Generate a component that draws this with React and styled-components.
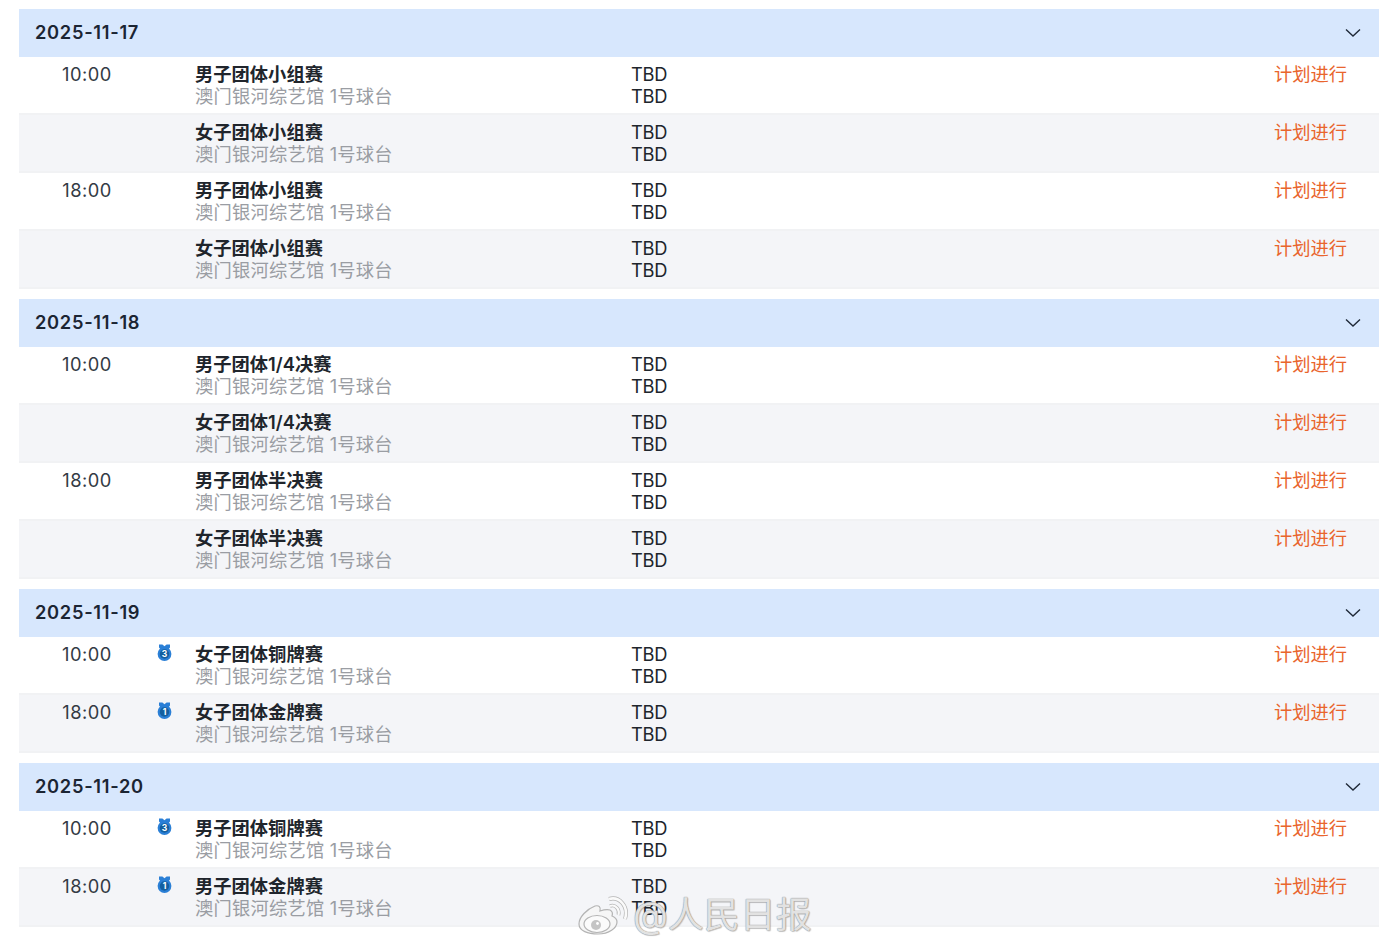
import React from 'react';
import styled, { createGlobalStyle } from 'styled-components';

const GlobalStyle = createGlobalStyle`
    html, body {
        margin: 0;
        padding: 0;
        background: #ffffff;
        font-family: Inter, "Noto Sans CJK SC", sans-serif;
    }
`;

const schedule = [
    {
        date: '2025-11-17',
        rows: [
            { time: '10:00', title: '男子团体小组赛' },
            { title: '女子团体小组赛' },
            { time: '18:00', title: '男子团体小组赛' },
            { title: '女子团体小组赛' },
        ],
    },
    {
        date: '2025-11-18',
        rows: [
            { time: '10:00', title: '男子团体1/4决赛' },
            { title: '女子团体1/4决赛' },
            { time: '18:00', title: '男子团体半决赛' },
            { title: '女子团体半决赛' },
        ],
    },
    {
        date: '2025-11-19',
        rows: [
            { time: '10:00', title: '女子团体铜牌赛', medal: 3 },
            { time: '18:00', title: '女子团体金牌赛', medal: 1 },
        ],
    },
    {
        date: '2025-11-20',
        rows: [
            { time: '10:00', title: '男子团体铜牌赛', medal: 3 },
            { time: '18:00', title: '男子团体金牌赛', medal: 1 },
        ],
    },
];

const Medal = ({ rank }) => (
    <MedalIcon viewBox="0 0 15 17" aria-hidden="true">
        <path d="M2 0.5 L5.4 0.5 L7.5 2.2 L9.6 0.5 L13 0.5 L13 3.5 L10.5 6.5 L4.5 6.5 L2 3.5 Z" fill="#2a7fd6" />
        <circle cx="7.5" cy="10" r="6.9" fill="#2a7fd6" />
        <circle cx="7.5" cy="10" r="4.7" fill="#145f9f" />
        <text x="7.5" y="13.1" textAnchor="middle" fontSize="8.5" fontWeight="700" fill="#ffffff">{rank}</text>
    </MedalIcon>
);

const Chevron = () => (
    <ChevronIcon viewBox="0 0 16 10" aria-hidden="true">
        <path d="M1 1.5 L8 8 L15 1.5" fill="none" stroke="#1f2937" strokeWidth="1.4" />
    </ChevronIcon>
);

const WeiboLogo = () => (
    <LogoIcon viewBox="0 0 50 40" aria-hidden="true">
        <path
            d="M17 11 C9 14 1 22 1 29 C1 36 10 39 20 39 C31 39 39 33 39 27 C39 23 36 22 34 21 C35 18 34 16 32 15 C29 14 25 15 22 16 C23 12 21 10 17 11 Z"
            fill="#f6f6f6"
            stroke="#b4b4b4"
            strokeWidth="1.2"
        />
        <ellipse cx="19" cy="29" rx="13" ry="8.5" fill="#fbfbfb" stroke="#b4b4b4" strokeWidth="1.2" />
        <circle cx="18" cy="30" r="5" fill="#c4c4c4" />
        <circle cx="19.5" cy="28.5" r="1.4" fill="#ffffff" />
        <path d="M31 4 C41 1 51 11 47 24" fill="none" stroke="#b4b4b4" strokeWidth="4" />
        <path d="M31 4 C41 1 51 11 47 24" fill="none" stroke="#fafafa" strokeWidth="2.6" />
        <path d="M32 11 C37 9 42 14 40.5 20" fill="none" stroke="#b4b4b4" strokeWidth="3.6" />
        <path d="M32 11 C37 9 42 14 40.5 20" fill="none" stroke="#fafafa" strokeWidth="2.2" />
    </LogoIcon>
);

const App = () => {
    return (
        <Page>
            <GlobalStyle />
            {schedule.map((day) => (
                <Group key={day.date}>
                    <DayHeader>
                        <DayDate>{day.date}</DayDate>
                        <Chevron />
                    </DayHeader>
                    {day.rows.map((row, rowIndex) => (
                        <Row key={rowIndex} $shaded={rowIndex % 2 === 1}>
                            <Time>{row.time}</Time>
                            <MedalCell>{row.medal ? <Medal rank={row.medal} /> : null}</MedalCell>
                            <Event>
                                <EventTitle>{row.title}</EventTitle>
                                <Venue>澳门银河综艺馆 1号球台</Venue>
                            </Event>
                            <Teams>
                                <span>TBD</span>
                                <span>TBD</span>
                            </Teams>
                            <Status>计划进行</Status>
                        </Row>
                    ))}
                </Group>
            ))}
            <Watermark>
                <WeiboLogo />
                <WatermarkText>@人民日报</WatermarkText>
            </Watermark>
        </Page>
    );
};

const Page = styled.div`
    position: relative;
    box-sizing: border-box;
    width: 1394px;
    height: 948px;
    padding: 9px 15px 0 19px;
    display: flex;
    flex-direction: column;
    gap: 10px;
    overflow: hidden;
`;

const Group = styled.section`
    display: flex;
    flex-direction: column;
`;

const DayHeader = styled.div`
    height: 48px;
    padding: 0 18px 0 16px;
    display: flex;
    align-items: center;
    justify-content: space-between;
    background: #d7e7fd;
`;

const DayDate = styled.div`
    font-size: 18.3px;
    font-weight: 600;
    letter-spacing: 0.7px;
    color: #1b2533;
    margin-top: -2px;
`;

const ChevronIcon = styled.svg`
    width: 16px;
    height: 10px;
`;

const Row = styled.div`
    box-sizing: border-box;
    height: 58px;
    padding-top: 6px;
    display: grid;
    grid-template-columns: 134px 22px 457px 1fr auto;
    align-items: start;
    font-size: 18.3px;
    line-height: 22px;
    background: ${(props) => (props.$shaded ? '#f4f5f8' : '#ffffff')};
    border-bottom: 2px solid #f1f2f4;
`;

const Time = styled.div`
    text-align: center;
    letter-spacing: 0.5px;
    padding-left: 2px;
    color: #333a44;
`;

const MedalCell = styled.div`
    display: flex;
    justify-content: center;
    padding: 1px 0 0 1px;
`;

const MedalIcon = styled.svg`
    width: 15px;
    height: 17px;
    font-family: Inter, sans-serif;
`;

const Event = styled.div`
    margin-left: 20px;
    display: flex;
    flex-direction: column;
`;

const EventTitle = styled.div`
    font-weight: 600;
    color: #20252c;
`;

const Venue = styled.div`
    letter-spacing: 0.2px;
    color: #9a9da3;
`;

const Teams = styled.div`
    display: flex;
    flex-direction: column;
    margin-left: -1px;
    letter-spacing: -0.3px;
    color: #20252c;
`;

const Status = styled.div`
    padding-right: 32px;
    color: #e9652d;
`;

const Watermark = styled.div`
    position: absolute;
    left: 578px;
    top: 893px;
    display: flex;
    align-items: center;
    gap: 5px;
`;

const LogoIcon = styled.svg`
    width: 50px;
    height: 40px;
`;

const WatermarkText = styled.div`
    font-size: 36px;
    line-height: 44px;
    color: rgba(255, 255, 255, 0.75);
    text-shadow: 0 0 1px #8d8d8d, 0 0 1px #8d8d8d, 1px 1px 1px rgba(0, 0, 0, 0.2);
`;

export default App;
